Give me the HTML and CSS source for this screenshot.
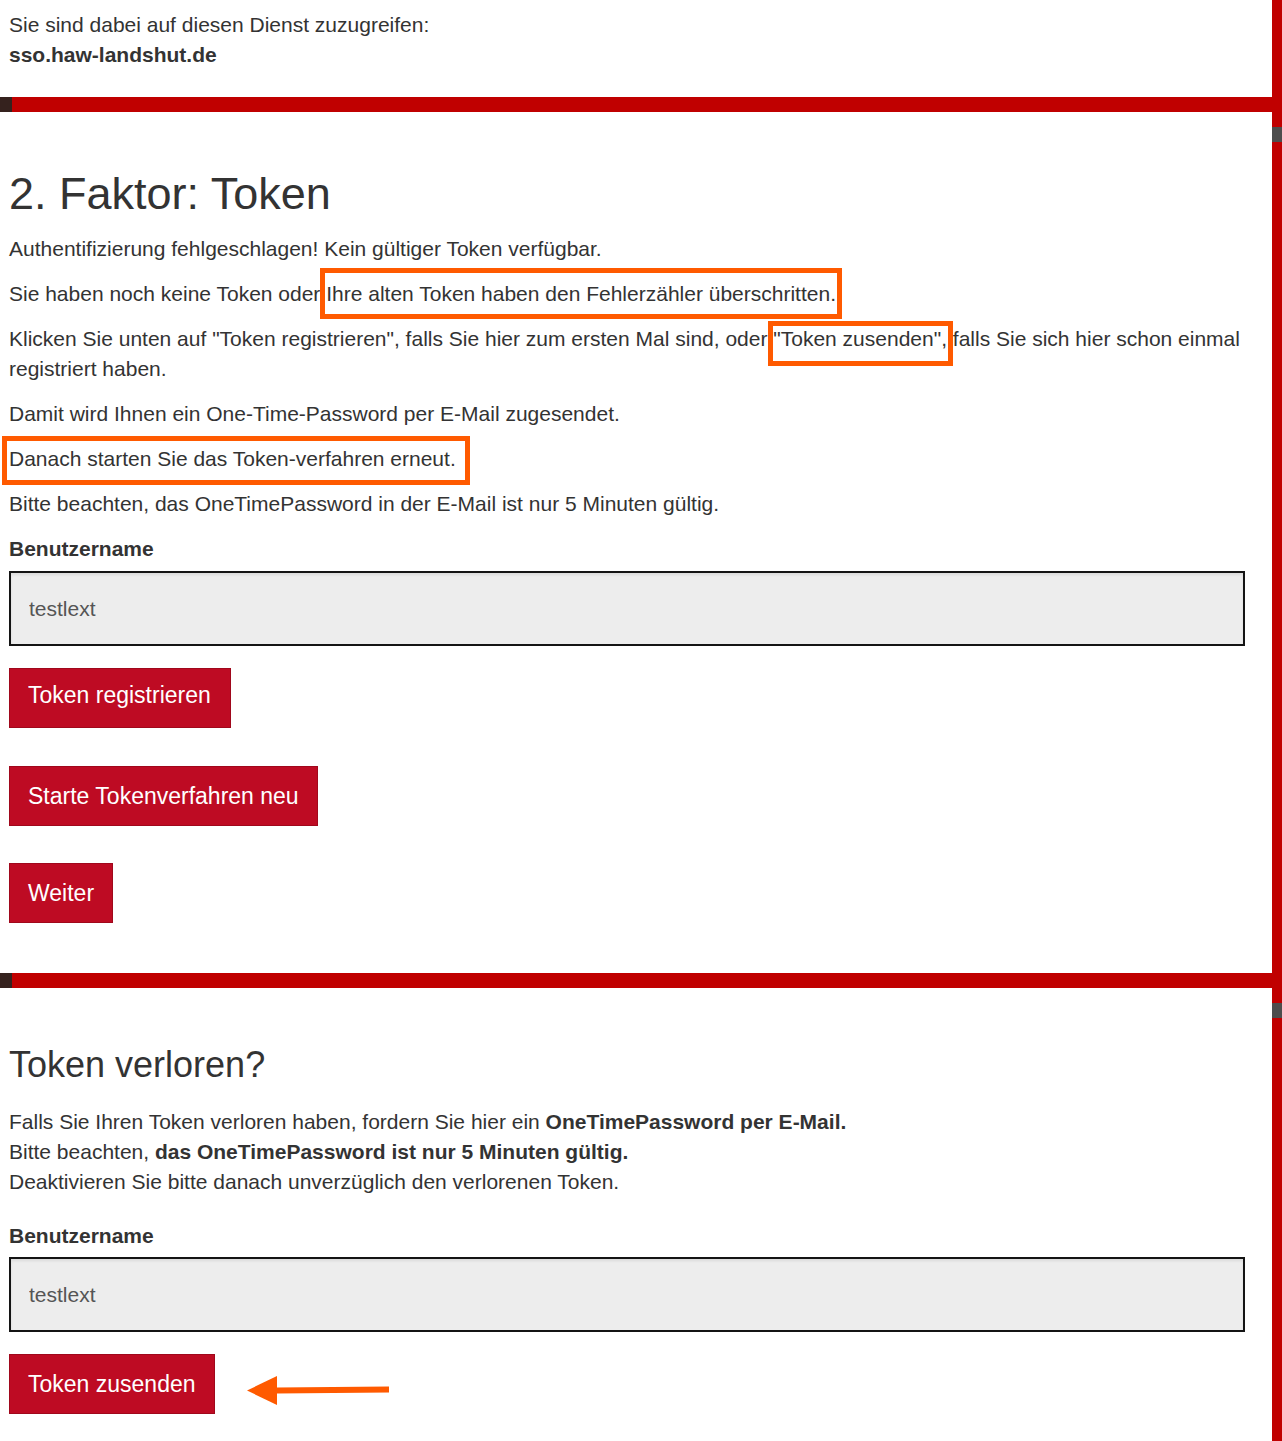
FILE: index.html
```html
<!DOCTYPE html>
<html lang="de">
<head>
<meta charset="utf-8">
<title>2. Faktor: Token</title>
<link rel="stylesheet" href="styles.css">
</head>
<body>
<div class="frame">
  <main class="main">
    <div class="service">
      <p class="service-line">Sie sind dabei auf diesen Dienst zuzugreifen:</p>
      <p class="service-line"><strong>sso.haw-landshut.de</strong></p>
    </div>

    <div class="divider"><span class="divider-cap"></span><span class="divider-line"></span></div>

    <section class="panel panel-token">
      <h2 class="title">2. Faktor: Token</h2>
      <p class="text">Authentifizierung fehlgeschlagen! Kein gültiger Token verfügbar.</p>
      <p class="text">Sie haben noch keine Token oder <span class="mark mark-a">Ihre alten Token haben den Fehlerzähler überschritten.</span></p>
      <p class="text">Klicken Sie unten auf "Token registrieren", falls Sie hier zum ersten Mal sind, oder <span class="mark mark-b">"Token zusenden",</span> falls Sie sich hier schon einmal registriert haben.</p>
      <p class="text">Damit wird Ihnen ein One-Time-Password per E-Mail zugesendet.</p>
      <p class="text"><span class="mark mark-c">Danach starten Sie das Token-verfahren erneut.</span></p>
      <p class="text">Bitte beachten, das OneTimePassword in der E-Mail ist nur 5 Minuten gültig.</p>

      <label class="field-label" for="user1">Benutzername</label>
      <input class="field" id="user1" type="text" value="testlext" readonly>

      <div class="actions">
        <button class="btn btn-first" type="button">Token registrieren</button>
        <button class="btn" type="button">Starte Tokenverfahren neu</button>
        <button class="btn btn-last" type="button">Weiter</button>
      </div>
    </section>

    <div class="divider"><span class="divider-cap"></span><span class="divider-line"></span></div>

    <section class="panel panel-lost">
      <h2 class="title title-small">Token verloren?</h2>
      <p class="text lost-text">Falls Sie Ihren Token verloren haben, fordern Sie hier ein <strong>OneTimePassword per E-Mail.</strong><br>
      Bitte beachten, <strong>das OneTimePassword ist nur 5 Minuten gültig.</strong><br>
      Deaktivieren Sie bitte danach unverzüglich den verlorenen Token.</p>

      <label class="field-label" for="user2">Benutzername</label>
      <input class="field" id="user2" type="text" value="testlext" readonly>

      <div class="send-row">
        <button class="btn" type="button">Token zusenden</button>
        <svg class="arrow" width="144" height="32" viewBox="0 0 144 32" aria-hidden="true">
          <path d="M30 12.5 L142 11.5 L142 17.5 L30 18.5 Z" fill="#ff5a00"/>
          <path d="M0 15.5 L30 1 L30 30 Z" fill="#ff5a00"/>
        </svg>
      </div>
    </section>
  </main>

  <aside class="rail">
    <span class="rail-mark rail-mark-top"></span>
    <span class="rail-mark rail-mark-bottom"></span>
  </aside>
</div>
</body>
</html>
```

FILE: styles.css
```css
* {
  box-sizing: border-box;
}

html, body {
  margin: 0;
  padding: 0;
  background: #ffffff;
}

body {
  font-family: "Liberation Sans", Arial, sans-serif;
  font-size: 21px;
  line-height: 30px;
  color: #333333;
}

.frame {
  display: flex;
  min-height: 100vh;
}

.main {
  flex: 1;
  min-width: 0;
}

/* service header */
.service {
  padding: 10px 27px 27px 9px;
}

.service-line {
  margin: 0;
}

/* red separator with dark start cap */
.divider {
  display: flex;
  height: 15px;
}

.divider-cap {
  width: 12px;
  background: #35221e;
}

.divider-line {
  flex: 1;
  background: #c00000;
}

/* content panels */
.panel {
  padding: 0 27px 0 9px;
}

.panel-token {
  padding-top: 58px;
  padding-bottom: 50px;
}

.panel-lost {
  padding-top: 57px;
  padding-bottom: 27px;
}

.title {
  margin: 0 0 16px;
  font-size: 45px;
  line-height: 48px;
  font-weight: normal;
  color: #333333;
}

.title-small {
  font-size: 36px;
  line-height: 40px;
  margin-bottom: 22px;
}

.text {
  margin: 0 0 15px;
}

.lost-text {
  margin-bottom: 24px;
}

.text strong {
  font-weight: bold;
}

/* highlighted passages */
.mark {
  position: relative;
}

.mark::after {
  content: "";
  position: absolute;
  border: 5px solid #ff5a00;
  pointer-events: none;
}

.mark-a::after {
  top: -14px;
  bottom: -14px;
  left: -6px;
  right: -6px;
}

.mark-b::after {
  top: -6px;
  bottom: -16px;
  left: -5px;
  right: -6px;
}

.mark-c::after {
  top: -11px;
  bottom: -15px;
  left: -7px;
  right: -14px;
}

/* form fields */
.field-label {
  display: block;
  font-weight: bold;
  margin-bottom: 7px;
}

.panel-lost .field-label {
  margin-bottom: 6px;
}

.field {
  display: block;
  width: 100%;
  height: 75px;
  margin: 0;
  padding: 0 18px;
  border: 2px solid #141414;
  border-radius: 0;
  background: #ededed;
  box-shadow: inset 0 2px 3px rgba(0, 0, 0, 0.08);
  font-family: "Liberation Sans", Arial, sans-serif;
  font-size: 21px;
  color: #555555;
  outline: none;
}

/* buttons */
.actions {
  display: flex;
  flex-direction: column;
  align-items: flex-start;
  gap: 38px;
  margin-top: 22px;
}

.btn {
  display: inline-block;
  height: 60px;
  margin: 0;
  padding: 0 18px;
  border: 1px solid #a0081c;
  border-radius: 0;
  background: #be0b23;
  color: #ffffff;
  font-family: "Liberation Sans", Arial, sans-serif;
  font-size: 23px;
  line-height: 58px;
  cursor: pointer;
}

.btn-first {
  line-height: 52px;
  padding-bottom: 6px;
  padding-right: 19px;
}

.btn-last {
  margin-top: -1px;
}

.send-row {
  display: flex;
  align-items: flex-start;
  margin-top: 22px;
}

.arrow {
  display: block;
  margin: 21px 0 0 32px;
}

/* right red rail */
.rail {
  width: 10px;
  flex: none;
  display: flex;
  flex-direction: column;
  background: #c00000;
}

.rail-mark {
  display: block;
  height: 15px;
  background: #4d4d4d;
}

.rail-mark-top {
  margin-top: 127px;
}

.rail-mark-bottom {
  margin-top: 861px;
}
```
